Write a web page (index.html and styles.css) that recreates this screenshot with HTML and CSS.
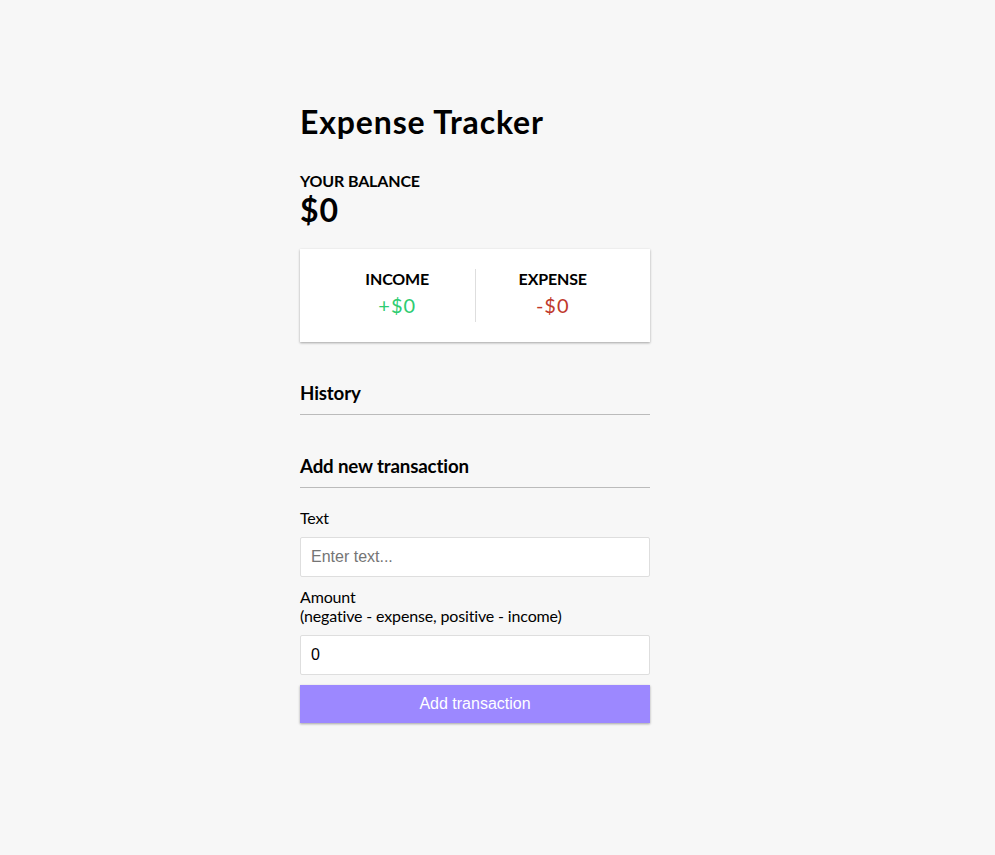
FILE: index.html
```html
<!DOCTYPE html>
<html lang="en">
<head>
<meta charset="utf-8">
<title>Expense Tracker</title>
<link rel="stylesheet" href="styles.css">
</head>
<body>
<div class="container">
  <h2 class="title">Expense Tracker</h2>
  <h4>Your Balance</h4>
  <h1 class="balance">$0</h1>
  <div class="inc-exp-container">
    <div>
      <h4>Income</h4>
      <p class="money plus">+$0</p>
    </div>
    <div>
      <h4>Expense</h4>
      <p class="money minus">-$0</p>
    </div>
  </div>
  <h3>History</h3>
  <ul class="list"></ul>
  <h3>Add new transaction</h3>
  <form>
    <div class="form-control">
      <label for="text">Text</label>
      <input type="text" id="text" placeholder="Enter text...">
    </div>
    <div class="form-control">
      <label for="amount">Amount <br>(negative - expense, positive - income)</label>
      <input type="number" id="amount" value="0" placeholder="Enter amount...">
    </div>
    <button class="btn" type="button">Add transaction</button>
  </form>
</div>
</body>
</html>
```

FILE: styles.css
```css
* {
  box-sizing: border-box;
}

body {
  background-color: #f7f7f7;
  display: flex;
  flex-direction: column;
  align-items: center;
  justify-content: center;
  min-height: 100vh;
  margin: 0;
  padding-right: 45px;
  font-family: "Lato", "Open Sans", sans-serif;
  letter-spacing: -0.15px;
}

.container {
  margin: 30px auto;
  width: 350px;
}

.title {
  font-size: 32px;
  letter-spacing: 0.85px;
  margin: 0 0 30px;
}

.balance {
  letter-spacing: 1px;
  margin: 0;
  font-size: 32px;
}

h3 {
  border-bottom: 1px solid #bbb;
  padding-bottom: 10px;
  margin: 40px 0 10px;
}

h4 {
  margin: 0;
  text-transform: uppercase;
}

.inc-exp-container {
  background-color: #fff;
  box-shadow: 0 1px 3px rgba(0, 0, 0, 0.12), 0 1px 2px rgba(0, 0, 0, 0.24);
  padding: 20px;
  display: flex;
  justify-content: space-between;
  margin: 20px 0;
}

.inc-exp-container > div {
  flex: 1;
  text-align: center;
}

.inc-exp-container > div:first-of-type {
  border-right: 1px solid #dedede;
}

.money {
  font-size: 20px;
  letter-spacing: 1px;
  margin: 5px 0;
}

.money.plus {
  color: #2ecc71;
}

.money.minus {
  color: #c0392b;
}

.list {
  list-style-type: none;
  padding: 0;
  margin-bottom: 40px;
}

label {
  display: inline-block;
  margin: 10px 0;
}

input[type="text"],
input[type="number"] {
  border: 1px solid #dedede;
  border-radius: 2px;
  display: block;
  font-size: 16px;
  font-family: "Liberation Sans", Arial, sans-serif;
  letter-spacing: normal;
  padding: 10px;
  width: 100%;
}

.btn {
  cursor: pointer;
  background-color: #9c88ff;
  box-shadow: 0 1px 3px rgba(0, 0, 0, 0.12), 0 1px 2px rgba(0, 0, 0, 0.24);
  color: #fff;
  border: 0;
  display: block;
  font-size: 16px;
  font-family: "Liberation Sans", Arial, sans-serif;
  letter-spacing: normal;
  margin: 10px 0 30px;
  padding: 10px;
  width: 100%;
}
```
